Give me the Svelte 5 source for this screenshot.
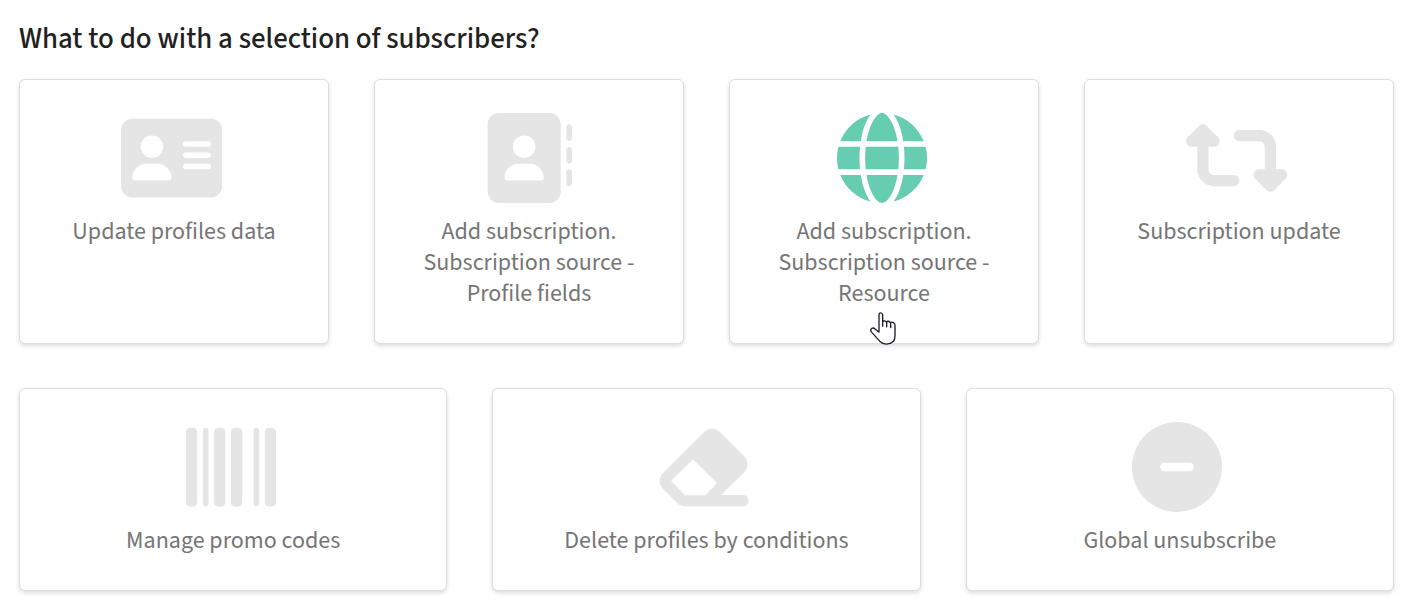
<script lang="ts">
  type Action = {
    id: string;
    label: string;
    width: number;
    path: string;
  };

  const profileActions: Action[] = [
    {
      id: "update-profiles",
      label: "Update profiles data",
      width: 576,
      path: "M64 32C28.7 32 0 60.7 0 96V416c0 35.3 28.7 64 64 64H512c35.3 0 64-28.7 64-64V96c0-35.3-28.7-64-64-64H64zm80 256h64c44.2 0 80 35.8 80 80c0 8.8-7.2 16-16 16H80c-8.8 0-16-7.2-16-16c0-44.2 35.8-80 80-80zm-32-96a64 64 0 1 1 128 0 64 64 0 1 1-128 0zm256-32H496c8.8 0 16 7.2 16 16s-7.2 16-16 16H368c-8.8 0-16-7.2-16-16s7.2-16 16-16zm0 64H496c8.8 0 16 7.2 16 16s-7.2 16-16 16H368c-8.8 0-16-7.2-16-16s7.2-16 16-16zm0 64H496c8.8 0 16 7.2 16 16s-7.2 16-16 16H368c-8.8 0-16-7.2-16-16s7.2-16 16-16z",
    },
    {
      id: "subscribe-fields",
      label: "Add subscription. Subscription source - Profile fields",
      width: 512,
      path: "M96 0C60.7 0 32 28.7 32 64V448c0 35.3 28.7 64 64 64H384c35.3 0 64-28.7 64-64V64c0-35.3-28.7-64-64-64H96zM208 288h64c44.2 0 80 35.8 80 80c0 8.8-7.2 16-16 16H144c-8.8 0-16-7.2-16-16c0-44.2 35.8-80 80-80zm-32-96a64 64 0 1 1 128 0 64 64 0 1 1-128 0zM512 80c0-8.8-7.2-16-16-16s-16 7.2-16 16v64c0 8.8 7.2 16 16 16s16-7.2 16-16V80zM496 192c-8.8 0-16 7.2-16 16v64c0 8.8 7.2 16 16 16s16-7.2 16-16V208c0-8.8-7.2-16-16-16zm16 144c0-8.8-7.2-16-16-16s-16 7.2-16 16v64c0 8.8 7.2 16 16 16s16-7.2 16-16V336z",
    },
    {
      id: "subscribe-resource",
      label: "Add subscription. Subscription source - Resource",
      width: 512,
      path: "M352 256c0 22.2-1.2 43.6-3.3 64H163.3c-2.2-20.4-3.3-41.8-3.3-64s1.2-43.6 3.3-64H348.7c2.2 20.4 3.3 41.8 3.3 64zm28.8-64H503.9c5.3 20.5 8.1 41.9 8.1 64s-2.8 43.5-8.1 64H380.8c2.1-20.6 3.2-42 3.2-64s-1.1-43.4-3.2-64zm112.6-32H376.7c-10-63.9-29.8-117.4-55.3-151.6c78.3 20.7 142 77.5 171.9 151.6zm-149.1 0H167.7c6.1-36.4 15.5-68.6 27-94.7c10.5-23.6 22.2-40.7 33.5-51.5C239.4 3.2 248.7 0 256 0s16.6 3.2 27.8 13.8c11.3 10.8 23 27.9 33.5 51.5c11.6 26 20.9 58.2 27 94.7zm-209 0H18.6C48.6 85.9 112.2 29.1 190.6 8.4C165.1 42.6 145.3 96.1 135.3 160zM8.1 192H131.2c-2.1 20.6-3.2 42-3.2 64s1.1 43.4 3.2 64H8.1C2.8 299.5 0 278.1 0 256s2.8-43.5 8.1-64zM194.7 446.6c-11.6-26-20.9-58.2-27-94.6H344.3c-6.1 36.4-15.5 68.6-27 94.6c-10.5 23.6-22.2 40.7-33.5 51.5C272.6 508.8 263.3 512 256 512s-16.6-3.2-27.8-13.8c-11.3-10.8-23-27.9-33.5-51.5zM135.3 352c10 63.9 29.8 117.4 55.3 151.6C112.2 482.9 48.6 426.1 18.6 352H135.3zm358.1 0c-30 74.1-93.6 130.9-171.9 151.6c25.5-34.2 45.2-87.7 55.3-151.6H493.4z",
    },
    {
      id: "subscription-update",
      label: "Subscription update",
      width: 576,
      path: "M272 416c17.7 0 32-14.3 32-32s-14.3-32-32-32H160c-17.7 0-32-14.3-32-32V192h32c12.9 0 24.6-7.8 29.6-19.8s2.2-25.7-6.9-34.9l-64-64c-12.5-12.5-32.8-12.5-45.3 0l-64 64c-9.2 9.2-11.9 22.9-6.9 34.9s16.6 19.8 29.6 19.8l32 0 0 128c0 53 43 96 96 96l112 0zM304 96c-17.7 0-32 14.3-32 32s14.3 32 32 32l112 0c17.7 0 32 14.3 32 32l0 128-32 0c-12.9 0-24.6 7.8-29.6 19.8s-2.2 25.7 6.9 34.9l64 64c12.5 12.5 32.8 12.5 45.3 0l64-64c9.2-9.2 11.9-22.9 6.9-34.9s-16.6-19.8-29.6-19.8l-32 0 0-128c0-53-43-96-96-96L304 96z",
    },
  ];

  const otherActions: Action[] = [
    {
      id: "promo-codes",
      label: "Manage promo codes",
      width: 512,
      path: "M24 32C10.7 32 0 42.7 0 56V456c0 13.3 10.7 24 24 24H40c13.3 0 24-10.7 24-24V56c0-13.3-10.7-24-24-24H24zm88 0c-8.8 0-16 7.2-16 16V464c0 8.8 7.2 16 16 16s16-7.2 16-16V48c0-8.8-7.2-16-16-16zm72 0c-13.3 0-24 10.7-24 24V456c0 13.3 10.7 24 24 24h16c13.3 0 24-10.7 24-24V56c0-13.3-10.7-24-24-24H184zm96 0c-13.3 0-24 10.7-24 24V456c0 13.3 10.7 24 24 24h16c13.3 0 24-10.7 24-24V56c0-13.3-10.7-24-24-24H280zM448 56V456c0 13.3 10.7 24 24 24h16c13.3 0 24-10.7 24-24V56c0-13.3-10.7-24-24-24H472c-13.3 0-24 10.7-24 24zm-64-8V464c0 8.8 7.2 16 16 16s16-7.2 16-16V48c0-8.8-7.2-16-16-16s-16 7.2-16 16z",
    },
    {
      id: "delete-profiles",
      label: "Delete profiles by conditions",
      width: 576,
      path: "M290.7 57.4L57.4 290.7c-25 25-25 65.5 0 90.5l80 80c12 12 28.3 18.7 45.3 18.7H288h9.4H512c17.7 0 32-14.3 32-32s-14.3-32-32-32H387.9L518.6 285.3c25-25 25-65.5 0-90.5L381.3 57.4c-25-25-65.5-25-90.5 0zM297.4 416H288l-105.4 0-80-80L227.3 211.3 364.7 348.7 297.4 416z",
    },
    {
      id: "global-unsubscribe",
      label: "Global unsubscribe",
      width: 512,
      path: "M256 512A256 256 0 1 0 256 0a256 256 0 1 0 0 512zM184 232H328c13.3 0 24 10.7 24 24s-10.7 24-24 24H184c-13.3 0-24-10.7-24-24s10.7-24 24-24z",
    },
  ];

  let active = $state("subscribe-resource");
</script>

{#snippet card(action: Action)}
  <button
    type="button"
    class="card"
    class:active={active === action.id}
    onmouseenter={() => (active = action.id)}
    onfocus={() => (active = action.id)}
  >
    <svg class="icon" viewBox="0 0 {action.width} 512" aria-hidden="true">
      <path d={action.path} />
    </svg>
    <span class="label">{action.label}</span>
    {#if active === action.id}
      <svg class="pointer" viewBox="89 95 78 98" aria-hidden="true">
        <path
          d="M116 155V103q0-6 5-6t6 6V123q5-4 11 1q6-4 12 2q6-3 10 1q4 2 4 7V165q0 10-4 17q-9 8-22 9q-12-1-20-9L93 154q-4-6 1-10q5-4 11 2z"
        />
        <path d="M127 122V137M139 125V139M151 127V141" />
      </svg>
    {/if}
  </button>
{/snippet}

<main>
  <h1>What to do with a selection of subscribers?</h1>

  <div class="row">
    {#each profileActions as action (action.id)}
      {@render card(action)}
    {/each}
  </div>

  <div class="row">
    {#each otherActions as action (action.id)}
      {@render card(action)}
    {/each}
  </div>
</main>

<style>
  :global(body) {
    background: #fff;
  }

  main {
    padding: 20px 19px 24px;
    font-family: "Source Sans 3", "Source Sans Pro", "Noto Sans CJK SC", sans-serif;
  }

  h1 {
    margin: 0 0 21px;
    font-size: 29px;
    line-height: 38px;
    font-weight: 500;
    color: #212121;
  }

  .row {
    display: flex;
    gap: 45px;
  }

  .row + .row {
    margin-top: 44px;
  }

  .card {
    position: relative;
    flex: 1 1 0;
    min-width: 0;
    display: flex;
    flex-direction: column;
    align-items: center;
    gap: 13px;
    padding: 33px 32px 34px;
    background: #fff;
    border: 1px solid #dedede;
    border-radius: 6px;
    box-shadow: 0 2px 4px rgba(0, 0, 0, 0.14);
    font-family: inherit;
    color: #757575;
    cursor: pointer;
  }

  .icon {
    height: 90px;
    margin-right: 5px;
    fill: #e5e5e5;
  }

  .active .icon {
    fill: #67cdb0;
  }

  .label {
    font-size: 24px;
    line-height: 31px;
    text-align: center;
  }

  .pointer {
    position: absolute;
    left: calc(50% - 14px);
    bottom: -2px;
    width: 26px;
    height: 33px;
    fill: #fff;
    stroke: #1b1b30;
    stroke-width: 4;
    stroke-linejoin: round;
    stroke-linecap: round;
  }
</style>
